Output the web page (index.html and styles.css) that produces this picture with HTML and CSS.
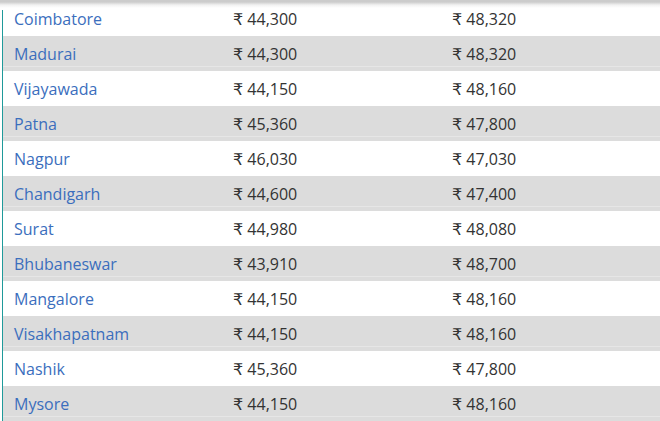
FILE: index.html
```html
<!DOCTYPE html>
<html>
<head>
<meta charset="utf-8">
<link rel="stylesheet" href="styles.css">
</head>
<body>
<div class="wrap">
  <div class="topshade"></div>
  <table class="rates">
    <tbody>
      <tr><td class="city">Coimbatore</td><td>₹ 44,300</td><td>₹ 48,320</td></tr>
      <tr><td class="city">Madurai</td><td>₹ 44,300</td><td>₹ 48,320</td></tr>
      <tr><td class="city">Vijayawada</td><td>₹ 44,150</td><td>₹ 48,160</td></tr>
      <tr><td class="city">Patna</td><td>₹ 45,360</td><td>₹ 47,800</td></tr>
      <tr><td class="city">Nagpur</td><td>₹ 46,030</td><td>₹ 47,030</td></tr>
      <tr><td class="city">Chandigarh</td><td>₹ 44,600</td><td>₹ 47,400</td></tr>
      <tr><td class="city">Surat</td><td>₹ 44,980</td><td>₹ 48,080</td></tr>
      <tr><td class="city">Bhubaneswar</td><td>₹ 43,910</td><td>₹ 48,700</td></tr>
      <tr><td class="city">Mangalore</td><td>₹ 44,150</td><td>₹ 48,160</td></tr>
      <tr><td class="city">Visakhapatnam</td><td>₹ 44,150</td><td>₹ 48,160</td></tr>
      <tr><td class="city">Nashik</td><td>₹ 45,360</td><td>₹ 47,800</td></tr>
      <tr><td class="city">Mysore</td><td>₹ 44,150</td><td>₹ 48,160</td></tr>
    </tbody>
  </table>
</div>
</body>
</html>
```
FILE: styles.css
```css
html, body {
  margin: 0;
  padding: 0;
  background: #fff;
}
body {
  font-family: "Open Sans", "DejaVu Sans", sans-serif;
  font-size: 16px;
  overflow: hidden;
}
.wrap {
  position: relative;
  width: 657px;
  margin-left: 2px;
  padding-top: 1px;
  border-left: 1px solid #1f9a9a;
}
.topshade {
  position: absolute;
  top: 0;
  left: -3px;
  width: 662px;
  height: 10px;
  background: linear-gradient(#cccccc 0, #cccccc 2px, #f2f2f2 5px, #ffffff 8px, #ffffff 10px);
}
.rates {
  width: 100%;
  border-collapse: collapse;
  table-layout: fixed;
}
.rates td {
  height: 35px;
  padding: 0 0 0 11px;
  box-sizing: border-box;
  color: #333;
  vertical-align: middle;
  white-space: nowrap;
}
.rates td.city {
  color: #3b6ebd;
}
.rates tr:nth-child(even) td {
  background: linear-gradient(#dcdcdc 0, #dcdcdc 30px, #e6e6e6 30px, #e6e6e6 31px, #dcdcdc 31px);
}
```
